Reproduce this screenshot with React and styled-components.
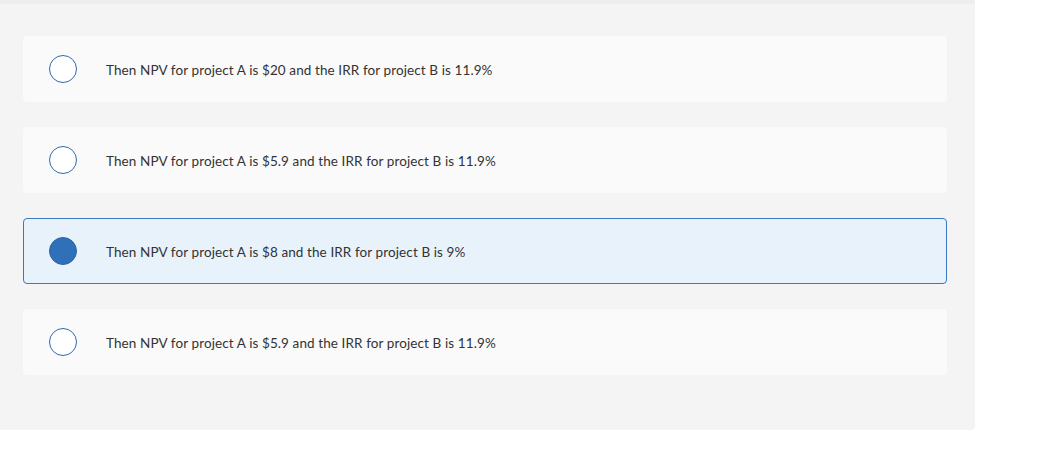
import styled, { createGlobalStyle } from "styled-components"

const GlobalStyle = createGlobalStyle`
    body {
        margin: 0;
        background: #fff;
        font-family: Lato, "Open Sans", sans-serif;
    }
`

const options = [
    { id: 1, text: "Then NPV for project A is $20 and the IRR for project B is 11.9%" },
    { id: 2, text: "Then NPV for project A is $5.9 and the IRR for project B is 11.9%" },
    { id: 3, text: "Then NPV for project A is $8 and the IRR for project B is 9%", selected: true },
    { id: 4, text: "Then NPV for project A is $5.9 and the IRR for project B is 11.9%" },
]

const App = () => {
    return (
        <>
            <GlobalStyle />
            <Page>
                <TopStrip />
                <Panel>
                    {options.map(option => (
                        <Choice key={option.id} selected={option.selected}>
                            <Radio selected={option.selected} />
                            <Label>{option.text}</Label>
                        </Choice>
                    ))}
                </Panel>
            </Page>
        </>
    )
}

const Page = styled.div`
    width: 975px;
    display: flex;
    flex-direction: column;
`
const TopStrip = styled.div`
    height: 4px;
    background: #eeeeee;
`
const Panel = styled.div`
    background: #f4f4f4;
    padding: 32px 28px 55px 23px;
    display: flex;
    flex-direction: column;
    row-gap: 25px;
    border-radius: 0 0 4px 0;
`
const Choice = styled.div`
    height: 66px;
    box-sizing: border-box;
    display: flex;
    align-items: center;
    padding-left: ${({selected}) => selected ? '25px' : '26px'};
    background: ${({selected}) => selected ? '#e8f2fb' : '#fafafa'};
    border: ${({selected}) => selected ? '1px solid #3b78c2' : 'none'};
    border-radius: 4px;
    cursor: pointer;
`
const Radio = styled.span`
    width: 28px;
    height: 28px;
    box-sizing: border-box;
    border-radius: 50%;
    border: 1.5px solid ${({selected}) => selected ? '#2d64a8' : '#2f6aad'};
    background: ${({selected}) => selected ? '#3070b8' : '#fff'};
    flex-shrink: 0;
`
const Label = styled.span`
    margin-left: 29px;
    font-size: 13.5px;
    letter-spacing: 0.1px;
    color: #333;
    margin-top: 2px;
`

export default App
